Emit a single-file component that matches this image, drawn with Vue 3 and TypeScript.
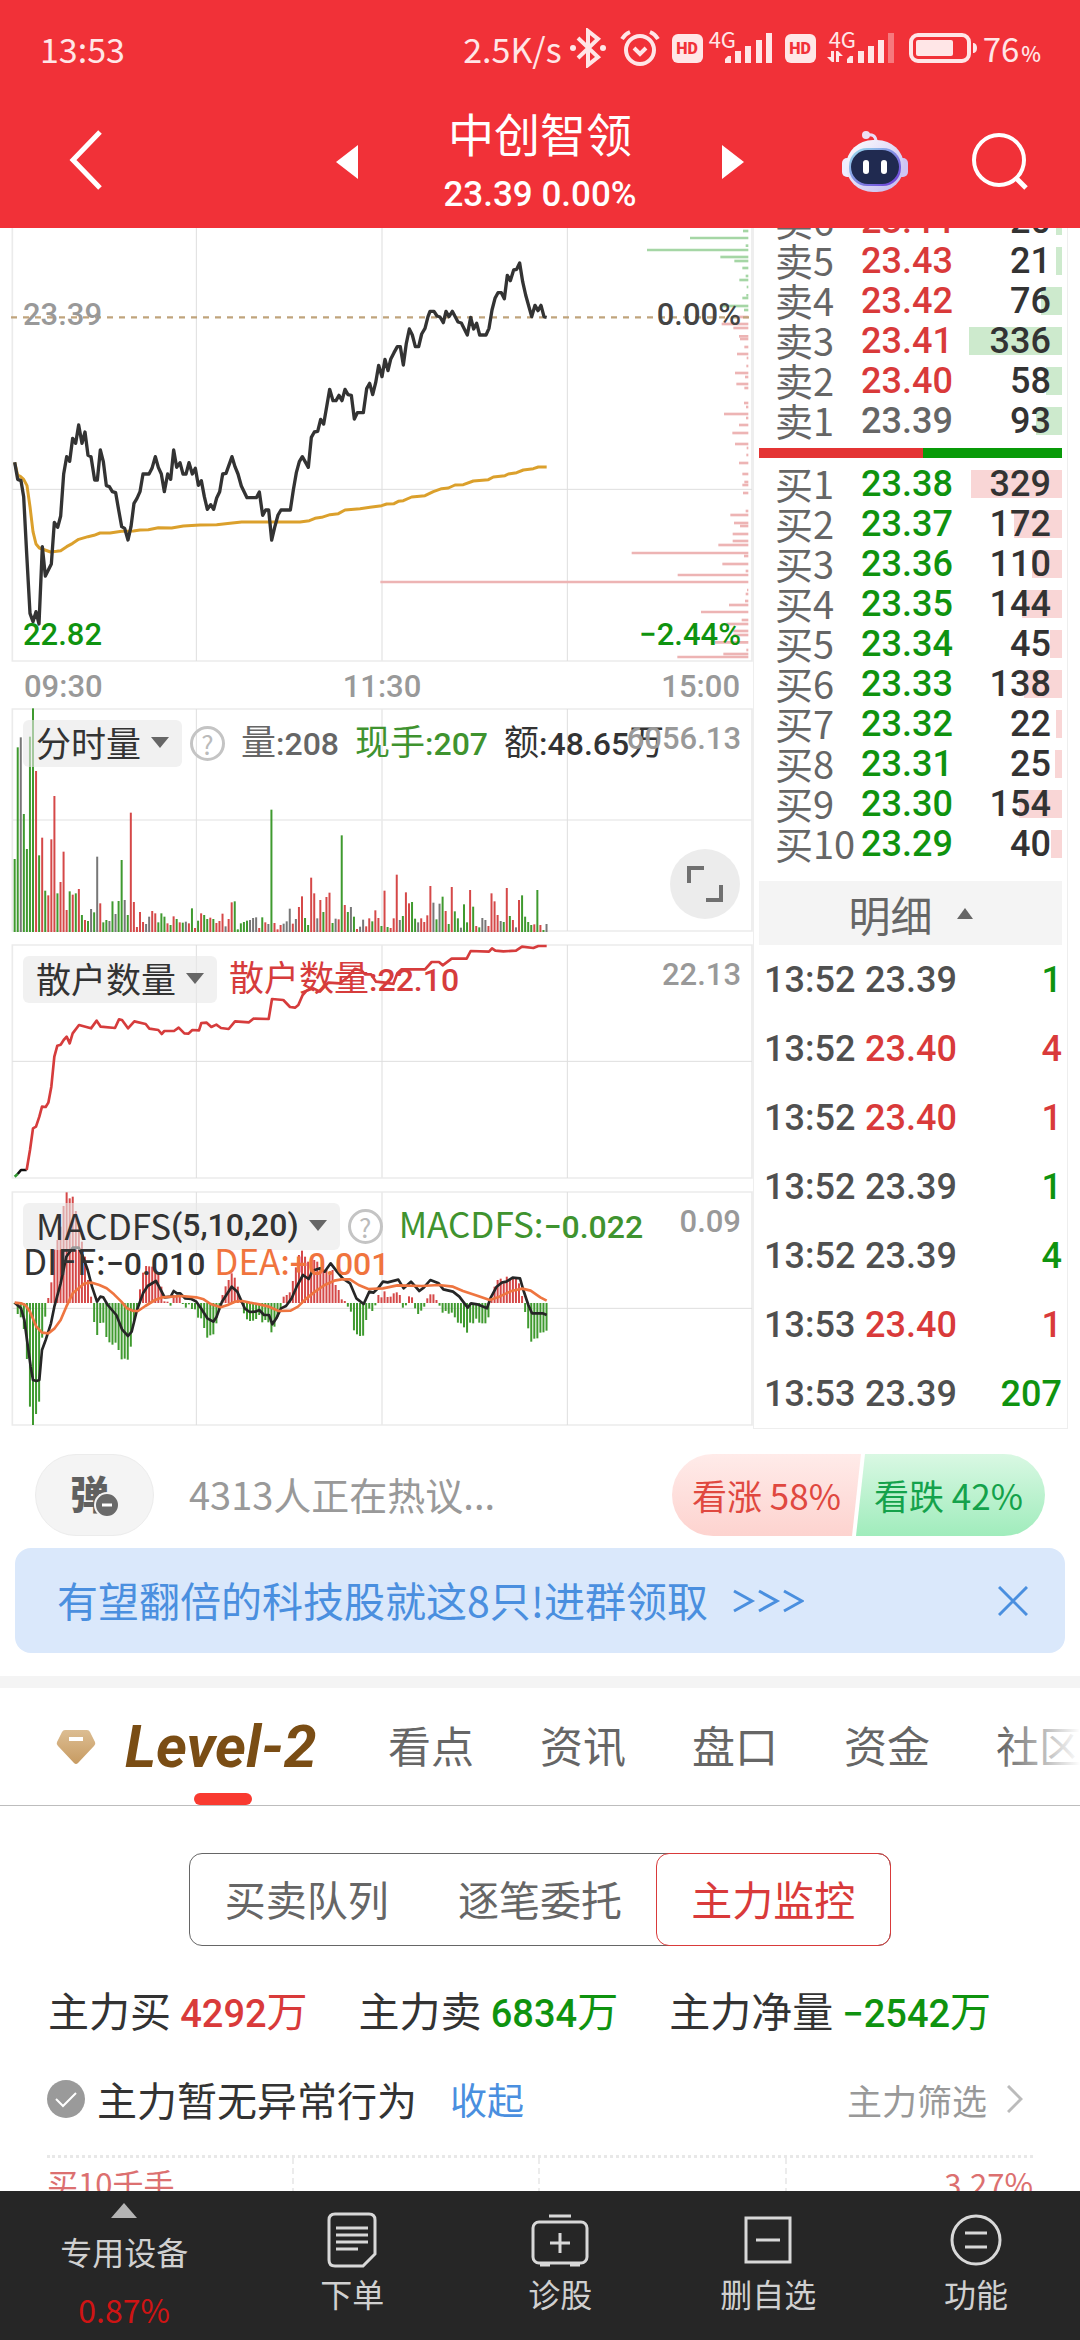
<script setup lang="ts">
type Tone = 'r' | 'g' | 'k'
interface BookRow { label: string; price: string; qty: number; tone: Tone }
interface Trade { time: string; price: string; qty: number; priceTone: Tone; qtyTone: Tone }

const sells: BookRow[] = [
  { label: '卖6', price: '23.44', qty: 20, tone: 'r' },
  { label: '卖5', price: '23.43', qty: 21, tone: 'r' },
  { label: '卖4', price: '23.42', qty: 76, tone: 'r' },
  { label: '卖3', price: '23.41', qty: 336, tone: 'r' },
  { label: '卖2', price: '23.40', qty: 58, tone: 'r' },
  { label: '卖1', price: '23.39', qty: 93, tone: 'k' },
]
const buys: BookRow[] = [329, 172, 110, 144, 45, 138, 22, 25, 154, 40].map((qty, i) => ({
  label: `买${i + 1}`,
  price: (23.38 - i * 0.01).toFixed(2),
  qty,
  tone: 'g' as Tone,
}))
const barWidth = (qty: number) => `${Math.round(qty * 0.277)}px`

const trades: Trade[] = [
  { time: '13:52', price: '23.39', qty: 1, priceTone: 'k', qtyTone: 'g' },
  { time: '13:52', price: '23.40', qty: 4, priceTone: 'r', qtyTone: 'r' },
  { time: '13:52', price: '23.40', qty: 1, priceTone: 'r', qtyTone: 'r' },
  { time: '13:52', price: '23.39', qty: 1, priceTone: 'k', qtyTone: 'g' },
  { time: '13:52', price: '23.39', qty: 4, priceTone: 'k', qtyTone: 'g' },
  { time: '13:53', price: '23.40', qty: 1, priceTone: 'r', qtyTone: 'r' },
  { time: '13:53', price: '23.39', qty: 207, priceTone: 'k', qtyTone: 'g' },
]

// One slot per trading minute, in chart units
const minuteX = (i: number) => 44 + i * 9.17

const priceLine =
  '44,727 53,778 63,782 71,830 80,1000 90,1180 99,1205 108,1175 117,1212 127,980 136,1068 154,1032 163,907 173,922 182,888 191,762 200,710 209,724 218,655 227,670 236,615 246,670 255,636 264,706 273,710 284,780 292,780 301,690 310,725 319,797 328,800 337,815 347,818 356,870 365,920 374,925 384,960 393,920 402,850 411,835 420,815 429,762 447,762 456,745 466,710 475,742 484,762 493,815 503,762 512,778 521,690 530,742 540,728 549,762 558,762 567,728 577,762 586,745 595,796 604,782 613,830 622,868 632,854 641,868 650,834 659,815 668,762 678,760 696,710 705,740 714,762 724,798 741,833 769,833 778,816 788,886 797,870 806,870 815,960 824,922 834,885 843,870 871,870 880,810 889,758 898,725 907,710 925,742 934,652 943,636 953,634 962,598 971,612 980,560 989,508 999,542 1008,542 1017,526 1026,542 1035,508 1044,524 1054,526 1063,597 1072,578 1090,578 1100,506 1109,490 1118,524 1127,488 1136,436 1146,470 1155,418 1164,452 1172,418 1182,398 1192,380 1201,380 1210,435 1219,370 1228,327 1237,345 1246,380 1256,380 1265,342 1275,325 1284,290 1290,274 1302,274 1311,288 1320,291 1330,308 1338,274 1347,290 1357,274 1374,306 1384,309 1402,345 1412,292 1421,327 1430,310 1439,345 1458,345 1467,325 1476,270 1485,235 1494,218 1504,218 1513,236 1522,166 1531,182 1541,150 1550,148 1559,129 1568,185 1577,225 1595,290 1605,256 1614,272 1623,256 1632,290 1640,292'
const averageLine =
  '44,727 53,765 62,770 71,778 81,797 90,860 99,935 108,972 118,984 135,990 152,996 170,994 182,992 200,980 218,970 236,958 264,950 282,946 300,939 330,939 365,934 400,933 420,930 445,929 475,923 515,924 550,918 600,915 650,914 690,910 725,906 900,906 928,902 945,895 965,892 990,884 1015,881 1035,870 1080,866 1110,862 1145,857 1160,852 1182,851 1195,844 1210,842 1235,831 1275,827 1300,815 1325,806 1345,804 1365,795 1390,794 1420,783 1465,779 1480,771 1515,767 1525,762 1550,758 1570,750 1600,746 1615,741 1640,741'

const parsePairs = (s: string) => s.split(' ').map((p) => p.split(':').map(Number))
const askDepth = parsePairs('33:16 54:175 77:8 90:304 111:84 123:42 144:18 168:8 180:27 201:5 226:6 234:18 258:85 270:13')
const bidDepth = parsePairs(
  '291:35 312:80 324:45 349:28 357:25 381:12 402:34 414:5 438:6 459:40 471:10 492:36 504:12 549:13 561:7 582:73 594:7 615:28 639:48 672:40 684:5 705:6 729:28 762:18 786:12 795:18 819:16 873:8 885:54 909:43 918:25 942:47 963:47 975:90 999:350 1008:13 1032:78 1053:8 1065:212 1086:1104 1110:4 1122:8 1143:10 1155:58 1176:142 1200:20 1212:65 1233:45 1245:45 1267:100 1290:6 1302:75 1311:213',
)

const volumes = (
  'g477 g142 k112 g342 g447 g110 g25 r213 g466 r413 g572 r586 r418 r288 g580 r546 r455 r630 g574 r584 g580 r567 g645 r660 g663 k627 g637 k470 r610 g667 g660 k663 g604 k642 g603 g480 k600 g645 r338 r606 r681 r636 r666 k672 k650 r633 r640 g667 g640 g650 r670 g675 r649 g657 r667 g668 k665 r670 g625 r684 g662 r640 g645 g657 r653 g657 r669 r663 r641 k679 r657 r607 g604 g688 g670 g666 g662 k660 k654 k652 r684 g652 r667 k672 g329 r669 r688 r675 k671 k664 k626 r671 k657 r621 r589 g654 g675 r533 r580 k655 r600 g636 r591 r578 g669 k656 r658 g406 r615 g636 k621 g650 r687 k680 k659 r679 r655 g664 r631 r654 g678 r572 g681 r684 r655 r524 k660 g648 r577 r610 g606 g656 k667 r655 r666 r646 r558 k608 g658 k611 g590 r633 g672 r561 g634 g655 k683 g613 g667 r570 g620 r678 g682 k654 k660 r678 r580 r604 r645 k663 g666 r564 g648 r660 k682 r600 g586 g650 g666 g675 r673 g570 r675 g690 k672'
).split(' ').map((v, i) => ({ x: minuteX(i), tone: v[0], top: Number(v.slice(1)) }))

const retailLine =
  '80,1410 90,1350 99,1285 108,1280 118,1250 126,1220 137,1221 145,1208 154,1160 163,1070 172,1037 182,1034 191,1020 200,1010 209,1030 218,1000 237,975 273,985 290,962 302,980 345,984 357,958 366,960 384,985 403,964 437,972 448,986 475,990 485,1002 493,993 522,993 536,983 553,1000 565,1001 577,990 597,991 604,969 620,968 634,981 649,974 663,984 686,987 705,964 747,967 760,956 806,957 816,897 850,900 870,921 885,923 895,915 908,885 920,872 940,865 960,875 985,848 1020,850 1045,830 1065,806 1085,812 1095,823 1113,823 1128,845 1155,848 1180,852 1192,820 1205,808 1275,808 1295,786 1317,786 1328,796 1355,776 1400,776 1412,753 1467,755 1476,745 1486,752 1510,754 1548,752 1566,740 1600,744 1615,738 1640,738'

const macdZero = 369
const macdBars = (
  '372 402 412 447 537 680 735 702 665 473 410 354 307 207 180 140 78 37 55 50 93 130 185 230 300 350 426 465 429 428 471 487 494 488 510 538 536 539 500 427 388 328 278 258 259 260 275 280 320 364 365 377 345 345 345 372 383 373 387 388 413 415 444 473 466 463 430 388 345 319 300 280 293 320 360 400 418 423 422 417 405 427 420 427 457 440 410 385 350 345 337 303 262 225 212 230 245 265 240 245 270 272 270 283 270 315 330 358 363 380 395 451 463 468 467 420 386 393 376 345 352 334 351 350 340 337 345 383 376 349 352 385 402 392 380 355 343 343 360 377 398 393 401 398 412 428 430 442 458 428 430 416 428 430 430 412 355 320 300 296 310 290 298 297 297 310 348 396 445 485 476 475 458 457 452'
).split(' ').map((v, i) => ({ x: minuteX(i), end: Number(v), tone: Number(v) < macdZero ? 'r' : 'g' }))

// The oscillator series is sampled on a coarser horizontal scale
const widen = (s: string) =>
  s.split(' ').map((p) => {
    const [x, y] = p.split(',').map(Number)
    return `${Math.round(x * 1.454)},${y}`
  }).join(' ')
const diffLine = widen(
  '30,368 43,385 50,420 56,480 63,560 68,600 75,603 81,600 87,510 94,480 105,430 112,380 125,310 137,230 150,203 162,203 170,225 181,270 190,320 200,365 207,350 213,352 222,375 240,405 252,448 264,468 272,455 283,390 295,340 305,318 322,303 330,325 340,352 352,350 358,333 365,340 372,340 382,355 395,357 405,365 415,385 428,415 440,425 447,410 458,365 478,320 490,335 505,385 515,396 527,395 535,390 545,405 555,405 562,433 570,415 580,385 590,378 602,355 612,320 625,285 637,297 645,272 660,265 670,275 682,250 695,275 707,295 722,310 735,355 750,372 762,335 770,338 780,325 790,305 800,307 822,299 833,325 848,305 865,333 875,322 888,300 905,310 915,328 935,335 948,350 965,383 972,370 985,373 1005,385 1012,355 1025,320 1035,308 1045,305 1058,293 1073,295 1080,330 1090,375 1098,400 1120,400 1128,405',
)
const deaLine = widen(
  '30,368 43,370 52,375 62,395 75,440 87,458 100,460 113,445 125,420 137,380 150,340 162,325 175,310 190,308 205,315 220,325 235,343 250,365 262,385 275,393 285,393 300,378 320,360 335,352 375,348 405,352 420,358 435,372 455,382 470,375 485,365 500,363 515,368 535,373 555,380 575,393 600,392 615,380 630,358 650,335 670,315 690,302 705,298 722,298 740,315 760,327 790,325 820,316 870,318 905,315 935,320 955,333 985,347 1010,360 1030,350 1055,333 1078,326 1095,332 1115,352 1128,362',
)

const tabs = ['看点', '资讯', '盘口', '资金', '社区']
const segments = ['买卖队列', '逐笔委托', '主力监控']
</script>

<template>
  <div class="page">
    <header class="top">
      <div class="status">
        <span class="clock">13:53</span>
        <div class="status-right">
          <span class="speed">2.5K/s</span>
          <svg class="bt" width="36" height="40" viewBox="0 0 36 40">
            <path d="M8 10 L28 29 L18 37 V3 L28 11 L8 30" fill="none" stroke="#ffe6e7" stroke-width="4" />
            <circle cx="3" cy="20" r="3" fill="#ffe6e7" /><circle cx="33" cy="20" r="3" fill="#ffe6e7" />
          </svg>
          <svg class="alarm" width="40" height="38" viewBox="0 0 40 38">
            <circle cx="20" cy="21" r="14" fill="none" stroke="#ffe6e7" stroke-width="4" />
            <path d="M14 19 L20 25 L26 19 M2 10 Q5 5 10 3 M30 3 Q35 5 38 10" fill="none" stroke="#ffe6e7" stroke-width="4" />
          </svg>
          <span class="hd">HD</span>
          <span class="signal">
            <span class="net">4G</span>
            <svg width="48" height="30" viewBox="0 0 48 30" fill="#ffe6e7">
              <path d="M0 30 V26 L3 23 H6 V30Z M10 18 h6 v12 h-6z M20 13 h6 v17 h-6z M31 7 h6 v23 h-6z M41 0 h6 v30 h-6z" />
            </svg>
          </span>
          <span class="hd">HD</span>
          <span class="signal second">
            <span class="net">4G</span>
            <svg width="68" height="30" viewBox="0 0 68 30" fill="#ffe6e7">
              <path d="M0 24 H4 V18 H7 V29 H5Z M9 18 H11 L16 23 H12 V29 H9Z M20 30 V26 L23 23 H26 V30Z M31 18 h6 v12 h-6z M41 13 h6 v17 h-6z M51 7 h6 v23 h-6z" />
              <path d="M61 0 h6 v30 h-6z" opacity=".4" />
            </svg>
          </span>
          <svg class="battery" width="68" height="30" viewBox="0 0 68 30">
            <rect x="2" y="2" width="58" height="26" rx="7" fill="none" stroke="#ffe6e7" stroke-width="4" />
            <rect x="7" y="7" width="37" height="16" rx="2" fill="#ffe6e7" />
            <path d="M64 10 h1 q3 1 3 5 t-3 5 h-1z" fill="#ffe6e7" />
          </svg>
          <span class="charge">76<small>%</small></span>
        </div>
      </div>
      <div class="titlebar">
        <button class="plain back" aria-label="返回">
          <svg width="34" height="60" viewBox="0 0 34 60"><path d="M31 2 L4 30 L31 58" fill="none" stroke="#fff" stroke-width="5" /></svg>
        </button>
        <div class="switcher">
          <button class="plain" aria-label="上一只">
            <svg width="22" height="34" viewBox="0 0 22 34"><path d="M22 0 V34 L0 17Z" fill="#fff" /></svg>
          </button>
          <div class="stock">
            <h1>中创智领</h1>
            <p class="num">23.39 0.00%</p>
          </div>
          <button class="plain" aria-label="下一只">
            <svg width="22" height="34" viewBox="0 0 22 34"><path d="M0 0 V34 L22 17Z" fill="#fff" /></svg>
          </button>
        </div>
        <div class="tools">
          <button class="plain" aria-label="智能助手">
            <svg width="66" height="64" viewBox="0 0 66 64">
              <defs>
                <linearGradient id="shell" x1="0" y1="0" x2="1" y2="1"><stop offset="0" stop-color="#fff" /><stop offset="1" stop-color="#c0b6ee" /></linearGradient>
                <linearGradient id="rim" x1="0" y1="0" x2="1" y2="1"><stop offset="0" stop-color="#9be4ef" /><stop offset="1" stop-color="#6a35d8" /></linearGradient>
              </defs>
              <path d="M24 6 Q34 4 34 13" fill="none" stroke="#eadcf8" stroke-width="3" />
              <circle cx="24" cy="6" r="4" fill="#eedff5" />
              <rect x="0" y="29" width="12" height="19" rx="5" fill="#eeecff" /><rect x="54" y="29" width="12" height="19" rx="5" fill="#cfc4f4" />
              <rect x="4" y="11" width="58" height="52" rx="27" fill="url(#shell)" />
              <rect x="7" y="19" width="52" height="38" rx="18" fill="url(#rim)" />
              <rect x="9" y="21" width="48" height="34" rx="17" fill="#202a50" />
              <rect x="21" y="31" width="6" height="14" rx="3" fill="#fff" /><rect x="39" y="31" width="6" height="14" rx="3" fill="#fff" />
            </svg>
          </button>
          <button class="plain" aria-label="搜索">
            <svg width="56" height="58" viewBox="0 0 56 58" fill="none" stroke="#fff" stroke-width="4"><circle cx="27" cy="28" r="25" /><path d="M44 46 L54 56" stroke-width="5" /></svg>
          </button>
        </div>
      </div>
    </header>

    <main class="body">
      <div class="market">
        <div class="charts">
          <section class="chart trend">
            <svg viewBox="0 24 2259 1302" preserveAspectRatio="none">
              <path d="M37 24 V1323 H2256 V24 M1146 24 V1323" class="frame" />
              <path d="M589 24 V1323 M1702 24 V1323 M37 808 H2256" class="grid" />
              <path v-for="[y, w] in askDepth" :key="'a' + y" :d="`M2245 ${y} h${-w}`" class="ask" />
              <path v-for="[y, w] in bidDepth" :key="'b' + y" :d="`M2245 ${y} h${-w}`" class="bid" />
              <path d="M33 292 H2256" class="base" />
              <polyline :points="averageLine" class="line avg" />
              <polyline :points="priceLine" class="line price" />
            </svg>
            <span class="num tag t-left t-base">23.39</span>
            <span class="num tag t-right t-base strong">0.00%</span>
            <span class="num tag t-left t-low g">22.82</span>
            <span class="num tag t-right t-low g">−2.44%</span>
          </section>
          <div class="axis num"><span>09:30</span><span>11:30</span><span>15:00</span></div>

          <section class="chart volume">
            <svg viewBox="0 24 2259 672" preserveAspectRatio="none">
              <path d="M37 27 H2256 V693 H37Z M1146 27 V693 M37 360 H2256" class="frame" />
              <path d="M589 27 V693 M1702 27 V693" class="grid" />
              <path v-for="v in volumes" :key="v.x" :d="`M${v.x} 696 V${v.top}`" :class="['bar', 's-' + v.tone]" />
            </svg>
            <div class="legend">
              <button class="picker">分时量<i class="caret"></i></button>
              <button class="help" aria-label="说明">?</button>
              <span class="k6">量<b class="num">:208</b></span>
              <span class="gg">现手<b class="num">:207</b></span>
              <span class="k3">额<b class="num">:48.65</b>万</span>
            </div>
            <span class="num tag t-right t-top">6056.13</span>
            <button class="expand" aria-label="全屏">
              <svg width="36" height="36" viewBox="0 0 36 36" fill="none" stroke="#707070" stroke-width="4"><path d="M2 17 V2 H17 M34 19 V34 H19" /></svg>
            </button>
          </section>

          <section class="chart retail">
            <svg viewBox="0 732 2259 705" preserveAspectRatio="none">
              <path d="M37 735 H2256 V1434 H37Z M1146 735 V1434" class="frame" />
              <path d="M589 735 V1434 M1702 735 V1434 M37 1084 H2256" class="grid" />
            </svg>
            <div class="legend">
              <button class="picker">散户数量<i class="caret"></i></button>
              <span class="rr">散户数量<b class="num">:22.10</b></span>
            </div>
            <svg class="over" viewBox="0 732 2259 705" preserveAspectRatio="none">
              <path d="M44 1430 L53 1422" stroke="#2f9a2f" class="line" />
              <path d="M53 1422 L63 1410 H80" stroke="#111" class="line" />
              <polyline :points="retailLine" stroke="#d63c3c" class="line" />
            </svg>
            <span class="num tag t-right t-top">22.13</span>
          </section>

          <section class="chart macd">
            <svg viewBox="0 33 2259 708" preserveAspectRatio="none">
              <path d="M37 36 H2256 V735 H37Z M1146 36 V735" class="frame" />
              <path d="M589 36 V735 M1702 36 V735 M37 385 H2256" class="grid" />
              <path v-for="v in macdBars" :key="v.x" :d="`M${v.x} ${macdZero} V${v.end}`" :class="['bar', 's-' + v.tone]" />
              <polyline :points="diffLine" stroke="#262626" class="line" />
              <polyline :points="deaLine" stroke="#ee7540" class="line" />
            </svg>
            <div class="legend">
              <button class="picker">MACDFS<b class="num">(5,10,20)</b><i class="caret"></i></button>
              <button class="help" aria-label="说明">?</button>
              <span class="gg">MACDFS:<b class="num">−0.022</b></span>
            </div>
            <div class="legend second-line">
              <span class="k3">DIFF:<b class="num">−0.010</b></span>
              <span class="dea">DEA:<b class="num">+0.001</b></span>
            </div>
            <span class="num tag t-right t-top">0.09</span>
          </section>
        </div>

        <aside class="quotes">
          <table class="book sell">
            <tbody>
              <tr v-for="r in sells" :key="r.label">
                <th scope="row">{{ r.label }}</th>
                <td class="num" :class="r.tone">{{ r.price }}</td>
                <td class="num qty"><i :style="{ width: barWidth(r.qty) }"></i><span>{{ r.qty }}</span></td>
              </tr>
            </tbody>
          </table>
          <div class="ratio"><i></i></div>
          <table class="book buy">
            <tbody>
              <tr v-for="r in buys" :key="r.label">
                <th scope="row">{{ r.label }}</th>
                <td class="num" :class="r.tone">{{ r.price }}</td>
                <td class="num qty"><i :style="{ width: barWidth(r.qty) }"></i><span>{{ r.qty }}</span></td>
              </tr>
            </tbody>
          </table>
          <button class="detail">明细<i></i></button>
          <table class="trades num">
            <tbody>
              <tr v-for="(t, i) in trades" :key="i">
                <td>{{ t.time }}</td>
                <td :class="t.priceTone">{{ t.price }}</td>
                <td class="last" :class="t.qtyTone">{{ t.qty }}</td>
              </tr>
            </tbody>
          </table>
        </aside>
      </div>

      <div class="talk">
        <button class="danmu" aria-label="弹幕">
          <span>弹</span>
          <svg width="26" height="26" viewBox="0 0 26 26"><circle cx="13" cy="13" r="12" fill="#6a6a6a" stroke="#f4f4f4" stroke-width="2" /><path d="M8 13 H18" stroke="#fff" stroke-width="3" /></svg>
        </button>
        <a class="hot" href="#">4313人正在热议...</a>
        <div class="vote">
          <button class="up">看涨 58%</button>
          <button class="down">看跌 42%</button>
        </div>
      </div>

      <div class="banner">
        <a href="#">有望翻倍的科技股就这8只!进群领取</a>
        <svg width="72" height="26" viewBox="0 0 72 26" fill="none" stroke="#4a8fdf" stroke-width="3"><path d="M2 3 L20 13 L2 23 M27 3 L45 13 L27 23 M52 3 L70 13 L52 23" /></svg>
        <button class="plain close" aria-label="关闭">
          <svg width="30" height="30" viewBox="0 0 30 30" stroke="#4a8fdf" stroke-width="3"><path d="M1 1 L29 29 M29 1 L1 29" /></svg>
        </button>
      </div>

      <nav class="tabs">
        <button class="plain level">
          <svg width="40" height="36" viewBox="0 0 40 36">
            <defs><linearGradient id="gem" x1="0" y1="0" x2="0" y2="1"><stop offset="0" stop-color="#dcbd92" /><stop offset="1" stop-color="#c79b62" /></linearGradient></defs>
            <path d="M9 1 H31 Q33 1 34 3 L39 13 Q40 15 38 17 L22 34 Q20 36 18 34 L2 17 Q0 15 1 13 L6 3 Q7 1 9 1Z" fill="url(#gem)" />
            <path d="M13 10 H27" stroke="#fff" stroke-width="4" />
          </svg>
          <span>Level-2</span>
        </button>
        <button v-for="t in tabs" :key="t" class="plain tab">{{ t }}</button>
      </nav>

      <div class="segmented">
        <button v-for="(s, i) in segments" :key="s" :class="{ active: i === 2 }">{{ s }}</button>
      </div>

      <div class="stats">
        <p>主力买 <span class="r"><b class="num">4292</b>万</span></p>
        <p>主力卖 <span class="g"><b class="num">6834</b>万</span></p>
        <p>主力净量 <span class="g"><b class="num">−2542</b>万</span></p>
      </div>

      <div class="notice">
        <svg width="38" height="38" viewBox="0 0 38 38"><circle cx="19" cy="19" r="19" fill="#9a9a9a" /><path d="M9 19 L16 26 L29 13" fill="none" stroke="#fff" stroke-width="2" /></svg>
        <span>主力暂无异常行为</span>
        <button class="plain fold">收起</button>
        <button class="plain filter">主力筛选
          <svg width="16" height="28" viewBox="0 0 16 28"><path d="M1 1 L14 14 L1 27" fill="none" stroke="#bbb" stroke-width="3" /></svg>
        </button>
      </div>

      <div class="flow">
        <div class="cell">买10千手</div>
        <div class="cell"></div>
        <div class="cell"></div>
        <div class="cell end">3.27%</div>
      </div>
    </main>

    <footer class="dock">
      <button class="sector">
        <i></i>
        <span>专用设备</span>
        <strong>0.87%</strong>
      </button>
      <button>
        <svg width="50" height="56" viewBox="0 0 50 56" fill="none" stroke="#d8d8d8" stroke-width="3"><path d="M8 2 H42 Q48 2 48 8 V42 L36 54 H8 Q2 54 2 48 V8 Q2 2 8 2Z M9 16 H41 M9 23 H41 M9 30 H41 M9 37 H31" /></svg>
        <span>下单</span>
      </button>
      <button>
        <svg width="58" height="56" viewBox="0 0 58 56" fill="none" stroke="#d8d8d8" stroke-width="3"><rect x="2" y="10" width="54" height="41" rx="6" /><path d="M18 4 H40 M29 21 V41 M19 31 H39 M9 53 H19 M39 53 H49" /></svg>
        <span>诊股</span>
      </button>
      <button>
        <svg width="48" height="56" viewBox="0 0 48 56" fill="none" stroke="#d8d8d8" stroke-width="3"><path d="M2 6 H46 V50 H2Z M12 28 H36" /></svg>
        <span>删自选</span>
      </button>
      <button>
        <svg width="52" height="56" viewBox="0 0 52 56" fill="none" stroke="#d8d8d8" stroke-width="3"><circle cx="26" cy="28" r="24" /><path d="M15 21 H37 M15 35 H37" /></svg>
        <span>功能</span>
      </button>
    </footer>
  </div>
</template>

<style>
body { margin: 0; background: #fff; }
</style>

<style scoped>
.page {
  height: 100vh;
  display: flex;
  flex-direction: column;
  background: #fff;
  color: #333;
  font-family: "Noto Sans CJK SC", sans-serif;
  overflow: hidden;
}
.page * { box-sizing: border-box; }
button { font: inherit; color: inherit; border: 0; padding: 0; background: none; display: flex; align-items: center; justify-content: center; }
svg { display: block; }
a { text-decoration: none; }
h1, p { margin: 0; font-weight: 400; }
i, em { font-style: normal; }
.num { font-family: Roboto, "Noto Sans CJK SC", sans-serif; font-weight: 500; }
.r { color: #d93a3a; }
.g { color: #0f930f; }

.top { flex: none; background: #f13138; color: #fff; position: relative; z-index: 1; }
.status { height: 96px; padding: 0 39px 0 40px; display: flex; justify-content: space-between; align-items: center; font-size: 33px; color: #ffe6e7; }
.clock, .speed { font-size: 34px; }
.status-right { display: flex; align-items: center; }
.bt { margin-left: 8px; }
.alarm { margin: 0 12px 0 14px; }
.hd { width: 31px; height: 29px; border-radius: 6px; background: #ffe6e7; color: #f13138; font: 900 16px/29px Roboto, sans-serif; text-align: center; }
.signal { position: relative; padding-left: 22px; margin-right: 12px; }
.signal.second { padding-left: 11px; margin-right: 14px; }
.net { position: absolute; left: 6px; top: -6px; font-size: 22px; line-height: 22px; }
.second .net { left: 13px; }
.charge { margin-left: 6px; }
.charge small { font-size: 21px; font-weight: 500; margin-left: 2px; }
.titlebar { height: 132px; padding: 0 52px; display: grid; grid-template-columns: 1fr 408px 1fr; align-items: start; }
.back { justify-self: start; margin: 34px 0 0 17px; }
.switcher { display: flex; justify-content: space-between; align-items: center; height: 132px; }
.stock { text-align: center; }
.stock h1 { font-size: 46px; line-height: 66px; }
.stock p { font-size: 35px; line-height: 60px; }
.tools { display: flex; justify-content: flex-end; align-items: center; gap: 64px; height: 130px; }

.body { flex: 1; min-height: 0; overflow: hidden; display: flex; flex-direction: column; }
.body > * { flex: none; }
.market { display: flex; margin-right: 12px; }
.charts { flex: 1; min-width: 0; }
.chart { position: relative; }
.chart > svg { width: 100%; height: 100%; }
.chart .over { position: absolute; inset: 0; }
.trend { height: 434px; }
.volume { height: 224px; }
.retail { height: 235px; margin-top: 12px; }
.macd { height: 236px; margin-top: 12px; }
.frame { fill: none; stroke: #ebebeb; stroke-width: 5; }
.grid { fill: none; stroke: #dedede; stroke-width: 3; }
.base { stroke: #c0a47c; stroke-width: 7; stroke-dasharray: 18 18; }
.ask { stroke: #a5d6a5; stroke-width: 8; }
.bid { stroke: #edb4b4; stroke-width: 8; }
.line { fill: none; stroke-width: 8; stroke-linejoin: round; }
.avg { stroke: #dba02c; stroke-width: 9; }
.price { stroke: #333; stroke-width: 10; }
.bar { stroke-width: 6; }
.s-r { stroke: #d54848; }
.s-g { stroke: #3f9a2f; }
.s-k { stroke: #777; }
.tag { position: absolute; font-size: 31px; line-height: 40px; color: #999; }
.tag.g { color: #0f930f; }
.tag.strong { color: #444; }
.t-left { left: 23px; }
.t-right { right: 12px; }
.t-base { top: 67px; }
.t-low { bottom: 7px; }
.t-top { top: 11px; }
.axis { height: 46px; padding: 2px 13px 0 24px; display: flex; justify-content: space-between; align-items: center; font-size: 31px; color: #999; }
.legend { position: absolute; top: 12px; left: 23px; display: flex; align-items: center; height: 47px; font-size: 35px; line-height: 44px; white-space: nowrap; }
.legend b { font-size: 32px; }
.picker { height: 47px; padding: 0 13px 3px; border-radius: 6px; background: rgba(232, 232, 232, .6); color: #333; }
.caret { margin-left: 10px; border: 9px solid transparent; border-top: 11px solid #666; border-bottom: 0; }
.help { width: 35px; height: 35px; margin-left: 8px; border: 3px solid #c4c4c4; border-radius: 50%; color: #bbb; font-size: 26px; line-height: 28px; }
.legend span { margin-left: 16px; padding-bottom: 3px; }
.picker + span { margin-left: 12px; }
.second-line { top: 49px; }
.legend.second-line span { margin-left: 0; margin-right: 9px; }
.k6 { color: #666; }
.k3 { color: #333; }
.gg { color: #3f932f; }
.rr { color: #d63c3c; }
.dea { color: #f0743e; }
.expand { position: absolute; right: 13px; bottom: 13px; width: 70px; height: 70px; border-radius: 50%; background: #ececec; }

.quotes { flex: 0 0 315px; padding: 0 5px; border: solid #eee; border-width: 0 1px 1px; overflow: hidden; }
table { width: 100%; border-collapse: collapse; table-layout: fixed; }
th, td { padding: 0; text-align: left; font-weight: 400; white-space: nowrap; }
.book { line-height: 40px; font-size: 36px; }
.book tr { height: 40px; }
.book th { width: 102px; padding-left: 16px; font-size: 38px; line-height: 38px; padding-bottom: 2px; color: #666; }
.book td { font-weight: 500; }
.book td.k { color: #666; }
.book th + td { width: 92px; }
.book .qty { position: relative; text-align: right; padding-right: 11px; }
.qty i { position: absolute; right: 0; top: 6px; height: 28px; background: #cdeacd; }
.buy .qty i { background: #f9d6d6; }
.qty span { position: relative; color: #333; }
.sell { margin-top: -27px; }
.ratio { height: 10px; margin: 7px 0 6px; background: #089a08; }
.ratio i { display: block; width: 54%; height: 100%; background: #e43434; }
.detail { width: 100%; height: 64px; margin-top: 17px; background: #f4f4f4; color: #666; font-size: 42px; }
.detail i { margin-left: 24px; border: 8px solid transparent; border-bottom: 11px solid #666; border-top: 0; }
.trades { font-size: 36px; color: #505050; }
.trades tr { height: 69px; }
.trades td { font-weight: 500; width: 100px; }
.trades td:first-child { width: 106px; padding-left: 5px; }
.trades td.last { width: auto; text-align: right; }
.trades td.r { color: #d93a3a; }
.trades td.g { color: #0f930f; }

.talk { display: flex; align-items: center; margin: 25px 35px 0; height: 82px; }
.danmu { position: relative; width: 119px; height: 82px; padding: 0 10px 6px 0; border-radius: 41px; border: 1px solid #ececec; background: #f4f4f4; color: #606060; font-size: 39px; font-weight: 900; }
.danmu svg { position: absolute; left: 58px; top: 37px; }
.hot { margin-left: 35px; padding-bottom: 3px; font-size: 38px; color: #999; }
.vote { margin-left: auto; display: flex; width: 373px; height: 82px; border-radius: 41px; overflow: hidden; font-size: 35px; }
.vote button { flex: none; height: 82px; padding-bottom: 2px; }
.up { width: 189px; color: #e0483f; background: linear-gradient(#ffebe9, #fdd3cf); clip-path: polygon(0 0, 100% 0, 180px 100%, 0 100%); }
.down { width: 193px; margin-left: -9px; color: #14a24b; background: linear-gradient(#d9f8e3, #a0ecbc); clip-path: polygon(13px 0, 100% 0, 100% 100%, 4px 100%); }
.banner { display: flex; align-items: center; height: 105px; margin: 12px 15px 0; padding: 0 37px 0 42px; border-radius: 16px; background: #dae8fb; font-size: 41px; }
.banner a { padding-bottom: 4px; color: #4a8fdf; }
.banner > svg { margin-left: 24px; }
.close { margin-left: auto; }

.tabs { display: flex; align-items: center; gap: 66px; height: 130px; margin-top: 23px; padding-left: 56px; border-top: 12px solid #f4f4f4; border-bottom: 1px solid #bdbdbd; color: #666; font-size: 43px; overflow: hidden; position: relative; }
.tabs::after { content: ""; position: absolute; right: 0; top: 0; width: 80px; height: 100px; background: linear-gradient(90deg, transparent, #fff); }
.tab { flex: none; height: 117px; padding-bottom: 5px; }
.level { position: relative; flex: none; width: 266px; height: 117px; justify-content: flex-start; gap: 29px; color: #7a4d14; }
.level span { font: italic 700 59px/60px Roboto, sans-serif; }
.level::after { content: ""; position: absolute; left: 138px; bottom: 0; width: 58px; height: 12px; border-radius: 6px; background: #f93a30; }

.segmented { display: flex; width: 65%; height: 93px; margin: 47px auto 0; border: 1px solid #666; border-radius: 13px; font-size: 41px; color: #666; }
.segmented button { flex: 1; padding-bottom: 3px; }
.segmented .active { margin: -1px; border: 1px solid #d93a3a; border-radius: 13px; color: #d93a3a; }
.stats { display: flex; gap: 51px; margin-top: 33px; padding-left: 48px; font-size: 41px; line-height: 60px; white-space: nowrap; }
.stats b { font-size: 38px; }
.stats span { font-size: 41px; }
.notice { display: flex; align-items: center; height: 60px; margin-top: 25px; padding: 0 57px 0 47px; font-size: 40px; }
.notice > span { margin-left: 12px; }
.fold { margin-left: 33px; color: #4a8fdf; font-size: 37px; }
.filter { margin-left: auto; gap: 20px; color: #999; font-size: 35px; }
.flow { display: grid; grid-template-columns: repeat(4, 1fr); margin: 26px 47px 0; border-top: 3px dotted #e8e8e8; color: #dc7070; font-size: 31px; line-height: 44px; }
.cell { height: 246px; padding-top: 3px; border-right: 2px dashed #ececec; }
.cell.end { border: 0; text-align: right; }

.dock { flex: none; display: flex; height: 149px; background: #262626; color: #d0d0d0; font-size: 32px; }
.dock button { flex: 1; flex-direction: column; justify-content: flex-start; padding-top: 21px; line-height: 46px; gap: 2px; }
.dock .sector { flex: 0 0 23%; padding-top: 12px; gap: 0; }
.sector i { border: 13px solid transparent; border-bottom: 15px solid #b4b4b4; border-top: 0; }
.sector span { margin-top: 10px; }
.sector strong { margin-top: 12px; font-weight: 400; color: #d01414; }
</style>
